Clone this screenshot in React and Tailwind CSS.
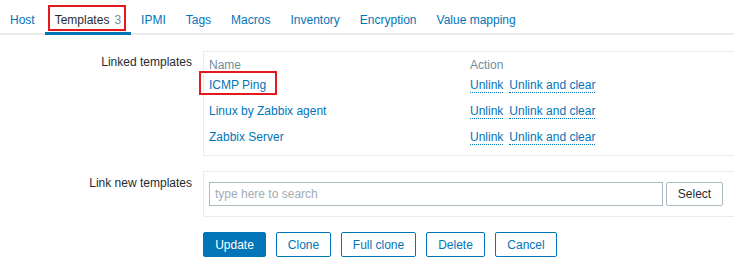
import React from 'react';

const tabs = ['Host', 'Templates', 'IPMI', 'Tags', 'Macros', 'Inventory', 'Encryption', 'Value mapping'];

const linked = ['ICMP Ping', 'Linux by Zabbix agent', 'Zabbix Server'];

function ActionLink({ children }) {
  return (
    <span className="inline-block leading-[14px] border-b border-dotted border-[#0275b8] text-[#0275b8]">
      {children}
    </span>
  );
}

function OutlineButton({ children, w }) {
  return (
    <button className={`h-[25px] rounded-[2px] border border-[#0275b8] bg-white text-[#0275b8] leading-none ${w}`}>
      {children}
    </button>
  );
}

export default function App() {
  return (
    <div className="w-[734px] h-[265px] bg-white overflow-hidden text-[12px] text-[#1f2c33] font-['Liberation_Sans',Arial,sans-serif]">
      {/* Tabs */}
      <nav className="flex h-[35px] border-b-2 border-[#ebebeb]">
        {tabs.map((t) =>
          t === 'Templates' ? (
            <div key={t} className="relative flex items-center h-[35px] px-[10px] -mb-[2px] border-b-[3px] border-[#0275b8] pt-[8px]">
              <span className="text-[#1f2c33]">{t}</span>
              <span className="ml-[5px] text-[#768d99]">3</span>
              <div className="absolute left-[3px] top-[5px] w-[78px] h-[26px] border-2 border-[#e3191c]" />
            </div>
          ) : (
            <div key={t} className="flex items-center h-[35px] px-[10px] pt-[5px] text-[#0275b8]">
              {t}
            </div>
          )
        )}
      </nav>

      <div className="pt-[16px] flex flex-col gap-[15px]">
        {/* Linked templates */}
        <div className="flex">
          <div className="w-[203px] pr-[11px] pt-[4px] text-right leading-[14px]">Linked templates</div>
          <div className="flex-1 border border-[#ebebeb] border-r-0 px-[5px] py-[5px]">
            <div className="flex h-[15px] items-center text-[#768d99]">
              <div className="w-[261px]">Name</div>
              <div>Action</div>
            </div>
            {linked.map((name, i) => (
              <div key={name} className="flex h-[26px] items-center">
                <div className="relative w-[261px] text-[#0275b8]">
                  {name}
                  {i === 0 && (
                    <div className="absolute left-[-10px] top-[-5px] w-[78px] h-[24px] border-2 border-[#e3191c]" />
                  )}
                </div>
                <div className="flex gap-[6px] pt-[1px]">
                  <ActionLink>Unlink</ActionLink>
                  <ActionLink>Unlink and clear</ActionLink>
                </div>
              </div>
            ))}
          </div>
        </div>

        {/* Link new templates */}
        <div className="flex">
          <div className="w-[203px] pr-[11px] pt-[5px] text-right leading-[14px]">Link new templates</div>
          <div className="flex-1 border border-[#ebebeb] border-r-0 pl-[5px] py-[10px] flex gap-[3px]">
            <div className="w-[454px] h-[24px] border border-[#acbbc2] flex items-center px-[5px] text-[#9fadb5]">
              type here to search
            </div>
            <button className="w-[57px] h-[24px] border border-[#acbbc2] rounded-[2px] bg-white text-[#1f2c33]">
              Select
            </button>
          </div>
        </div>

        {/* Buttons */}
        <div className="flex gap-[10px] pl-[203px]">
          <button className="w-[63px] h-[25px] rounded-[2px] border border-[#0275b8] bg-[#0275b8] text-white leading-none">
            Update
          </button>
          <OutlineButton w="w-[55px]">Clone</OutlineButton>
          <OutlineButton w="w-[75px]">Full clone</OutlineButton>
          <OutlineButton w="w-[59px]">Delete</OutlineButton>
          <OutlineButton w="w-[62px]">Cancel</OutlineButton>
        </div>
      </div>
    </div>
  );
}
